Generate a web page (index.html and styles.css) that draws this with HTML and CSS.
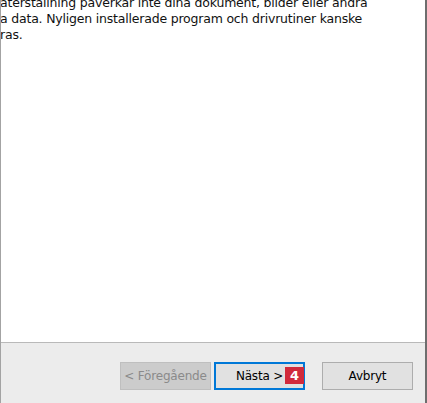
FILE: index.html
```html
<!DOCTYPE html>
<html lang="sv">
<head>
<meta charset="UTF-8" />
<title>Systemåterställning</title>
<link rel="stylesheet" href="styles.css">
</head>
<body>

<div class="window">
  <div class="content">
    <p class="info">återställning påverkar inte dina dokument, bilder eller andra<br>a data. Nyligen installerade program och drivrutiner kanske<br>ras.</p>
  </div>
  <div class="footer">
    <button class="btn" disabled>&lt; Föregående</button>
    <button class="btn default">Nästa &gt;<span class="badge">4</span></button>
    <button class="btn cancel">Avbryt</button>
  </div>
</div>

</body>
</html>
```

FILE: styles.css
```css
html, body {
  margin: 0;
  padding: 0;
}
body {
  font-family: Tahoma, "DejaVu Sans", Verdana, sans-serif;
  font-size: 13px;
  color: #000;
  background: #fff;
}
.window {
  width: 427px;
  height: 403px;
  box-sizing: border-box;
  border-left: 1px solid #a3a3a3;
  border-right: 2px solid #6e6e6e;
  display: flex;
  flex-direction: column;
  overflow: hidden;
}
.content {
  height: 342px;
  background: #fff;
  border-bottom: 1px solid #b9b9b9;
  overflow: hidden;
}
.info {
  margin: -5px 0 0 -1px;
  font-size: 12.5px;
  line-height: 16px;
  white-space: nowrap;
  letter-spacing: -0.2px;
  color: #111;
}
.footer {
  flex: 1;
  background: #ececec;
  display: flex;
  align-items: flex-start;
  padding: 19px 0 0 119px;
}
.btn {
  position: relative;
  box-sizing: border-box;
  width: 91px;
  height: 28px;
  margin: 0;
  padding: 0;
  font-family: inherit;
  font-size: 12px;
  letter-spacing: -0.2px;
  color: #000;
  background: #e1e1e1;
  border: 1px solid #adadad;
  cursor: pointer;
}
.btn:disabled {
  background: #cccccc;
  border-color: #bfbfbf;
  color: #8a8a8a;
  cursor: default;
}
.btn.default {
  width: 91px;
  margin-left: 3px;
  border: 2px solid #0078d7;
}
.btn.cancel {
  margin-left: 17px;
}
.badge {
  position: absolute;
  right: -1px;
  top: 3px;
  width: 19px;
  height: 17px;
  background: #d12a3c;
  color: #fff;
  font-weight: bold;
  font-size: 13px;
  line-height: 17px;
  text-align: center;
}
```
